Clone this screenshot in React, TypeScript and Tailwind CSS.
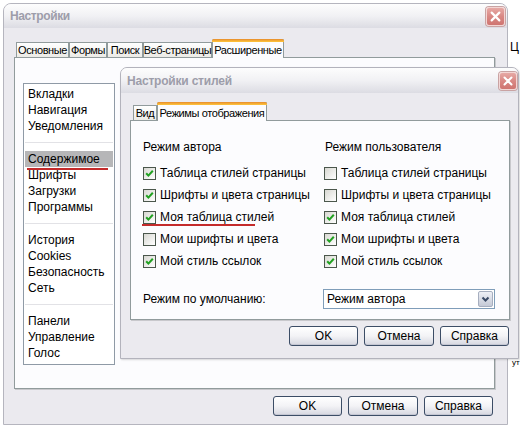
import React from "react";

// XP-style (silver) widgets used by both settings windows
function CloseButton({ size }: { size: number }) {
  return (
    <div
      className="flex items-center justify-center rounded-[3px] border border-[#f3d6d4] bg-linear-to-b from-[#e6a9a5] via-[#d98884] to-[#cf7571] shadow-[0_0_0_1px_#c9a3a3]"
      style={{ width: size, height: size }}
    >
      <svg width={size - 8} height={size - 8} viewBox="0 0 10 10">
        <path d="M1.5 1.5 L8.5 8.5 M8.5 1.5 L1.5 8.5" stroke="#fff" strokeWidth="2" strokeLinecap="round" />
      </svg>
    </div>
  );
}

function Tab({ label, width, active }: { label: string; width: number; active?: boolean }) {
  if (active) {
    return (
      <div
        className="relative z-10 -mb-px flex h-[19px] items-center justify-center whitespace-nowrap rounded-t-[2px] border border-b-0 border-[#919b9c] bg-[#fcfcfe] pt-[2px] text-[11px] tracking-[-0.4px]"
        style={{ width }}
      >
        <div className="absolute -left-px -right-px -top-px h-[3px] rounded-t-[2px] bg-linear-to-b from-[#e68b2c] to-[#ffc73c]" />
        {label}
      </div>
    );
  }
  return (
    <div
      className="flex h-[15px] items-center justify-center whitespace-nowrap border border-b-0 border-[#919b9c] bg-linear-to-b from-white to-[#ecebe6] text-[11px] tracking-[-0.4px]"
      style={{ width }}
    >
      {label}
    </div>
  );
}

function Button({ label, width = 69 }: { label: string; width?: number }) {
  return (
    <div
      className="flex h-[20px] items-center justify-center rounded-[3px] border border-[#3c4d66] bg-linear-to-b from-white via-[#f3f3f6] to-[#d6d7e0] shadow-[inset_0_-1px_0_#c4c6d2]"
      style={{ width }}
    >
      {label}
    </div>
  );
}

function Check({ on }: { on: boolean }) {
  return (
    <span className="flex h-[13px] w-[13px] shrink-0 items-center justify-center border border-[#4b574c] bg-linear-to-br from-[#d8d8d2] to-white">
      {on && (
        <svg width="9" height="9" viewBox="0 0 9 9">
          <path d="M1.2 4.2 L3.4 6.6 L7.8 1.8" stroke="#21a121" strokeWidth="2" fill="none" />
        </svg>
      )}
    </span>
  );
}

const groups = [
  ["Вкладки", "Навигация", "Уведомления"],
  ["Содержимое", "Шрифты", "Загрузки", "Программы"],
  ["История", "Cookies", "Безопасность", "Сеть"],
  ["Панели", "Управление", "Голос"],
];

const options = [
  { label: "Таблица стилей страницы", author: true, user: false },
  { label: "Шрифты и цвета страницы", author: true, user: false },
  { label: "Моя таблица стилей", author: true, user: true, mark: true },
  { label: "Мои шрифты и цвета", author: false, user: true },
  { label: "Мой стиль ссылок", author: true, user: true },
];

function SectionList() {
  return (
    <div className="ml-[8px] mt-[25px] flex h-[282px] w-[92px] flex-col border border-[#8f9aa6] bg-white px-px pt-[2px]">
      {groups.map((items, gi) => (
        <div key={gi}>
          {gi > 0 && (
            <div className="flex h-[17px] items-center">
              <div className="h-px w-full bg-[#e2e2e6]" />
            </div>
          )}
          {items.map((item) => (
            <div
              key={item}
              className={`relative flex h-[16px] items-center whitespace-nowrap pl-[3px] ${item === "Содержимое" ? "bg-[#b6b6b8]" : ""}`}
            >
              {item}
              {item === "Содержимое" && (
                <div className="absolute bottom-[-3px] left-[2px] h-[2px] w-[81px] bg-[#c42b2b]" />
              )}
            </div>
          ))}
        </div>
      ))}
    </div>
  );
}

function StyleDialog() {
  return (
    <div className="absolute left-[120px] top-[67px] flex h-[292px] w-[399px] flex-col rounded-t-[7px] border border-[#b3b3bc] bg-[#ebeaef] shadow-[1px_1px_2px_rgba(0,0,0,0.15)]">
      <div className="flex h-[25px] shrink-0 items-center justify-between rounded-t-[6px] bg-linear-to-b from-[#fdfdfd] via-[#f1f1f4] to-[#dcdce3] pl-[6px] pr-px">
        <span className="text-[12px] font-bold tracking-[-0.2px] text-[#9d9daa]">Настройки стилей</span>
        <CloseButton size={18} />
      </div>

      <div className="flex flex-col pl-[9px] pr-[8px] pt-[9px]">
        <div className="ml-[3px] flex items-end">
          <Tab label="Вид" width={24} />
          <Tab label="Режимы отображения" width={110} active />
        </div>
        <div className="h-[200px] border border-[#919b9c] bg-[#fcfcfe] pl-[12px] pt-[19px] shadow-[1px_1px_0_#c8c8cc]">
          <div className="grid grid-cols-[181px_1fr]">
            <div className="flex h-[14px] items-center">Режим автора</div>
            <div className="flex h-[14px] items-center pl-px">Режим пользователя</div>
          </div>
          <div className="mt-[8px] grid grid-cols-[181px_1fr]">
            {options.map((o) => (
              <React.Fragment key={o.label}>
                <div className="relative flex h-[22px] items-center gap-[4px] whitespace-nowrap">
                  <Check on={o.author} />
                  <span>{o.label}</span>
                  {o.mark && <div className="absolute left-[-1px] top-[18px] h-[2px] w-[113px] bg-[#c42b2b]" />}
                </div>
                <div className="flex h-[22px] items-center gap-[4px] whitespace-nowrap">
                  <Check on={o.user} />
                  <span>{o.label}</span>
                </div>
              </React.Fragment>
            ))}
          </div>
          <div className="mt-[17px] grid grid-cols-[180px_1fr] items-center">
            <span>Режим по умолчанию:</span>
            <div className="flex h-[20px] w-[172px] items-center justify-between border border-[#7f9db9] bg-white pl-[3px] pr-px">
              <span>Режим автора</span>
              <div className="flex h-[16px] w-[15px] items-center justify-center rounded-[2px] border border-[#a6aebf] bg-linear-to-b from-[#eef0f6] to-[#c4c9d6]">
                <svg width="9" height="7" viewBox="0 0 9 7">
                  <path d="M1.5 1.5 L4.5 4.5 L7.5 1.5" stroke="#3a4a66" strokeWidth="2" fill="none" />
                </svg>
              </div>
            </div>
          </div>
        </div>
        <div className="mt-[6px] flex justify-end gap-[6px] pr-px">
          <Button label="OK" />
          <Button label="Отмена" width={70} />
          <Button label="Справка" />
        </div>
      </div>
    </div>
  );
}

export default function App() {
  return (
    <div className="relative h-[430px] w-[520px] overflow-hidden bg-white font-['Liberation_Sans',Arial,sans-serif] text-[12px] leading-[14px] text-black">
      {/* page text peeking out behind the windows */}
      <span className="absolute left-[510px] top-[40px] text-[12px]">Ц</span>
      <span className="absolute left-[512px] top-[356px] text-[8px]">ут</span>

      <div className="absolute left-[3px] top-[3px] flex h-[422px] w-[505px] flex-col rounded-t-[8px] border border-[#b5b5be] bg-[#ebeaef]">
        <div className="flex h-[24px] shrink-0 items-center justify-between rounded-t-[7px] bg-linear-to-b from-[#fdfdfd] via-[#f1f1f4] to-[#dcdce3] pl-[6px] pr-[2px]">
          <span className="text-[12px] font-bold tracking-[-0.4px] text-[#9d9daa]">Настройки</span>
          <CloseButton size={19} />
        </div>

        <div className="flex flex-col pl-[10px] pr-[12px] pt-[11px]">
          <div className="ml-[2px] flex items-end">
            <Tab label="Основные" width={53} />
            <Tab label="Формы" width={38} />
            <Tab label="Поиск" width={36} />
            <Tab label="Веб-страницы" width={69} />
            <Tab label="Расширенные" width={72} active />
          </div>
          <div className="h-[332px] border border-[#919b9c] bg-[#fcfcfe] shadow-[1px_1px_0_#c8c8cc]">
            <SectionList />
          </div>
          <div className="mt-[7px] flex justify-end gap-[6px] pr-[2px]">
            <Button label="OK" />
            <Button label="Отмена" width={70} />
            <Button label="Справка" />
          </div>
        </div>
      </div>

      <StyleDialog />
    </div>
  );
}
